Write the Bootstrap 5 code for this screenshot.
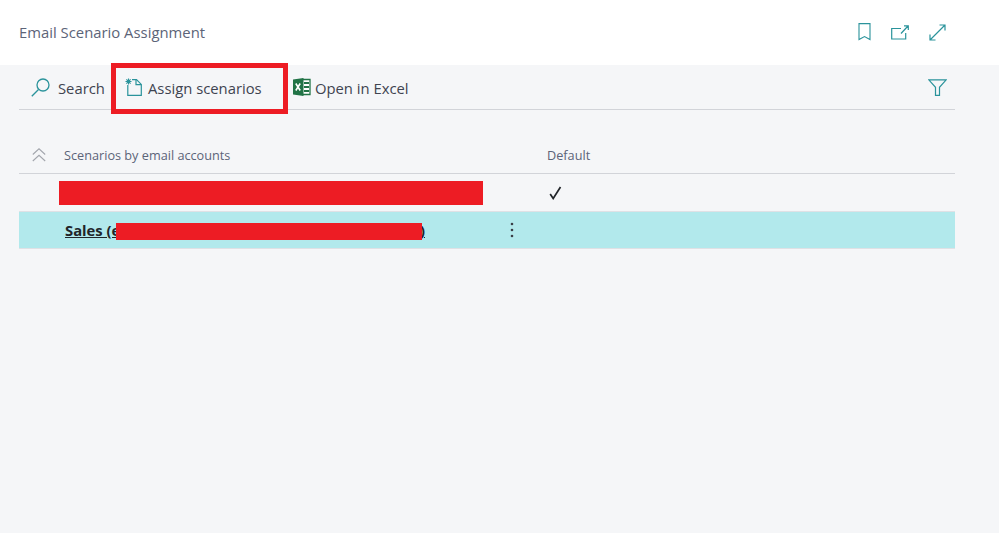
<!DOCTYPE html>
<html lang="en">
<head>
<meta charset="utf-8">
<title>Email Scenario Assignment</title>
<link href="https://cdn.jsdelivr.net/npm/bootstrap@5.3.0/dist/css/bootstrap.min.css" rel="stylesheet">
<style>
html,body{height:100%;}
body{background:#f5f6f8;font-family:"Open Sans","Noto Sans",sans-serif;color:#212529;overflow:hidden;}
.page-head{height:65px;background:#fff;padding:0 53px 0 19px;}
.page-title{font-size:14.85px;color:#5c6478;margin:0;}
.head-icons svg{display:block;flex:none;}
.icon-mark{margin-right:20px;position:relative;top:-1px;}
.icon-open{margin-right:20px;}
.work{width:955px;padding-left:19px;}
.tool-bar{height:45px;border-bottom:1px solid #d2d4d9;}
.tool{background:none;border:0;padding:0;display:flex;align-items:center;font-size:14.8px;color:#3f4450;white-space:nowrap;line-height:20px;}
.tool svg{flex:none;display:block;}
.tool-label{position:relative;top:1px;}
.tool-search{width:92px;padding-left:12px;gap:8px;}
.tool-assign{width:182px;padding-left:14px;gap:6px;position:relative;align-self:stretch;}
.tool-assign::after{content:"";position:absolute;left:0;top:-2px;width:177px;height:51px;border:5px solid #ed1c24;}
.tool-excel{gap:4px;}
.grid-head{margin-top:27px;height:37px;border-bottom:1px solid #d2d4d9;font-size:12.7px;color:#5c6478;line-height:20px;}
.cell-sort{width:45px;padding-left:13px;}
.cell-name{width:483px;}
.grid-row{height:37px;border-bottom:1px solid #dfe1e5;}
.grid-row.first{height:38px;}
.grid-row.picked{background:#b2e9ec;}
.cell-main{width:528px;padding-left:40px;}
.redact{height:24px;width:424px;background:#ed1c24;}
.more-dots{position:absolute;left:491px;top:50%;transform:translateY(-50%);width:4px;height:16px;}
.row-wrap{position:relative;}
.sales{position:relative;font-weight:700;font-size:14.8px;line-height:20px;color:#212529;margin-left:6px;width:360px;display:flex;justify-content:space-between;white-space:pre;}
.sales::after{content:"";position:absolute;left:51px;top:3px;width:306px;height:17px;background:#ed1c24;}
.sales:hover{color:#212529;}
.cell-check svg{display:block;margin-left:2px;}
</style>
</head>
<body>
<header class="page-head d-flex align-items-center justify-content-between">
  <h1 class="page-title fw-normal">Email Scenario Assignment</h1>
  <div class="head-icons d-flex align-items-center">
    <svg class="icon-mark" width="13" height="18" viewBox="0 0 13 18" fill="none" stroke="#2a939b" stroke-width="1.100"><path d="M1 .6h11v16l-5.500-3-5.500 3z"/></svg>
    <svg class="icon-open" width="18" height="15" viewBox="0 0 18 15" fill="none" stroke="#2a939b" stroke-width="1.200"><path d="M10 3.500H.7v10.500h14V8M10 8.500l7-7.500M13 .8h4.300V5"/></svg>
    <svg width="17" height="17" viewBox="0 0 17 17" fill="none" stroke="#2a939b" stroke-width="1.200"><path d="M1 16L16 1M10.500 1H16v5.500M1 10.500V16h5.500"/></svg>
  </div>
</header>
<main class="work">
  <div class="tool-bar d-flex align-items-center">
    <button class="tool tool-search" type="button">
      <svg width="19" height="19" viewBox="0 0 19 19" fill="none" stroke="#2a939b" stroke-width="1.300"><circle cx="12" cy="7" r="6"/><path d="M7.500 11.500L.8 18.300"/></svg>
      <span class="tool-label">Search</span>
    </button>
    <button class="tool tool-assign" type="button">
      <svg width="17" height="18" viewBox="0 0 17 18" fill="none" stroke="#2a939b" stroke-width="1.200"><path d="M7 1.600h4.500l4.800 4.800v11H2.800V7"/><path d="M11 1.600v5h5.300"/><path d="M3.500.5v6M.5 3.500h6M1.400 1.400l4.200 4.200M5.600 1.400L1.400 5.600" stroke-width="1.100"/></svg>
      <span class="tool-label">Assign scenarios</span>
    </button>
    <button class="tool tool-excel" type="button">
      <svg width="18" height="18" viewBox="0 0 18 18"><path d="M9 1.500h8v15H9" fill="#fff" stroke="#217346" stroke-width="1.300"/><path d="M11 5h5M11 9h5M11 13h5" stroke="#217346" stroke-width="2.200"/><path d="M0 1.500L10.500 0v18L0 16.500z" fill="#217346"/><path d="M2.800 5.500l4.400 7M7.200 5.500l-4.400 7" stroke="#fff" stroke-width="1.600"/></svg>
      <span class="tool-label">Open in Excel</span>
    </button>
    <svg class="ms-auto me-2" width="19" height="17" viewBox="0 0 19 17" fill="none" stroke="#2a939b" stroke-width="1.200"><path d="M.8.800h17.400l-6.700 7.500V16.300H7.500V8.300z"/></svg>
  </div>
  <div class="grid-head d-flex align-items-center">
    <div class="cell-sort"><svg class="d-block" width="14" height="14" viewBox="0 0 14 14" fill="none" stroke="#a3a6ad" stroke-width="1.100"><path d="M.8 6.500L7 .8l6.200 5.700M.8 13L7 7.300 13.200 13"/></svg></div>
    <div class="cell-name">Scenarios by email accounts</div>
    <div>Default</div>
  </div>
  <div class="grid-row first d-flex align-items-center">
    <div class="cell-main"><div class="redact"></div></div>
    <div class="cell-check"><svg width="13" height="14" viewBox="0 0 13 14" fill="none" stroke="#212529" stroke-width="1.700"><path d="M1.200 8l3 4.500L11.500 1"/></svg></div>
  </div>
  <div class="grid-row picked d-flex align-items-center">
    <div class="cell-main row-wrap"><a class="sales" href="#"><span class="text-decoration-underline">Sales (e</span><span class="text-decoration-underline">)</span></a>
      <svg class="more-dots" viewBox="0 0 4 16" fill="#3a3f47"><circle cx="2" cy="2" r="1.300"/><circle cx="2" cy="8" r="1.300"/><circle cx="2" cy="14" r="1.300"/></svg>
    </div>
  </div>
</main>
<script src="https://cdn.jsdelivr.net/npm/bootstrap@5.3.0/dist/js/bootstrap.bundle.min.js"></script>
</body>
</html>
